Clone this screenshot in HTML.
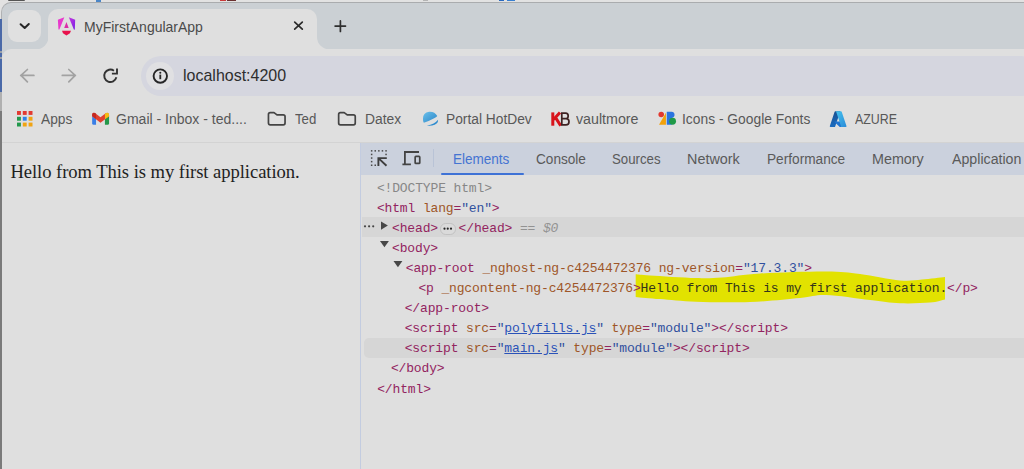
<!DOCTYPE html>
<html><head><meta charset="utf-8">
<style>
*{margin:0;padding:0;box-sizing:border-box}
html,body{width:1024px;height:469px;overflow:hidden;background:#e2e2e2;font-family:"Liberation Sans",sans-serif}
.a{position:absolute}
.t{position:absolute;white-space:pre;line-height:20px;height:20px}
#win{position:absolute;left:1px;top:1.5px;width:1030px;height:480px;background:#cbd0d4;border-top-left-radius:10px;border-top:1.5px solid #aaacae;border-left:1.2px solid #b0b2b4}
#leftedge{position:absolute;left:0;top:0;width:2px;height:469px}
.mono{font-family:"Liberation Mono",monospace;font-size:13px;letter-spacing:-0.14px}
.tg{color:#93245f}
.an{color:#9e5628}
.av{color:#30509e}
.gy{color:#878787}
.lnk{color:#2a52b8;text-decoration:underline}
.bm{font-size:15px;color:#474747}
.dt{font-size:14.5px;color:#4a4a4a}
</style></head><body>
<!-- desktop strip items -->
<div class="a" style="left:8px;top:0;width:17px;height:1.2px;border-radius:0 0 1px 1px;background:#555"></div>
<div class="a" style="left:96px;top:0;width:5px;height:1.5px;background:#4a86c8"></div>
<div class="a" style="left:220px;top:0;width:6px;height:1.3px;background:#c83a3a"></div><div class="a" style="left:227px;top:0;width:9px;height:1.3px;background:#6a3030"></div>
<div class="a" style="left:423px;top:0;width:5px;height:1.2px;background:#b4b4b4"></div>
<div class="a" style="left:499px;top:0;width:5px;height:1.3px;background:#2a6ac0"></div><div class="a" style="left:507px;top:0;width:8px;height:1.3px;background:#3a80d0"></div>

<div id="win"></div>
<!-- left edge strips -->
<div class="a" style="left:0;top:19px;width:1.5px;height:73px;background:#4a69a8"></div>
<div class="a" style="left:0;top:50.5px;width:1.5px;height:2px;background:#9aa0a8"></div>
<div class="a" style="left:0;top:56.5px;width:1.5px;height:2px;background:#9aa0a8"></div>
<div class="a" style="left:0;top:92px;width:1.5px;height:19px;background:#b0b0b0"></div>
<div class="a" style="left:0;top:111px;width:1.5px;height:358px;background:#7a7a7a"></div>

<!-- dropdown button -->
<div class="a" style="left:8px;top:10px;width:33px;height:32px;border-radius:9px;background:#e0e0e0"></div>
<svg class="a" style="left:0;top:0" width="50" height="50"><path d="M20.6 24.2 L24.7 28 L28.8 24" fill="none" stroke="#262626" stroke-width="2" stroke-linecap="round" stroke-linejoin="round"/></svg>

<!-- active tab -->
<div class="a" style="left:48px;top:9px;width:269px;height:42px;background:#dfdfdf;border-radius:10px 10px 0 0"></div>
<svg class="a" style="left:35.5px;top:37.2px" width="12.5" height="12.5" viewBox="0 0 12 12"><path d="M0 12 A12 12 0 0 0 12 0 L12 12 Z" fill="#dfdfdf"/></svg>
<svg class="a" style="left:317px;top:37.2px" width="12.5" height="12.5" viewBox="0 0 12 12"><path d="M12 12 A12 12 0 0 1 0 0 L0 12 Z" fill="#dfdfdf"/></svg>
<svg class="a" style="left:52px;top:12px" width="28" height="28" viewBox="0 0 469 469">
 <defs>
  <linearGradient id="ag" x1="0" y1="0" x2="1" y2="1"><stop offset="0" stop-color="#c834dc"/><stop offset="0.5" stop-color="#a02ce2"/><stop offset="1" stop-color="#761ce6"/></linearGradient>
 </defs>
 <path d="M98 128 L206 86 L124 292 L108 294 Z" fill="#e838cc"/>
 <path d="M282 86 L388 128 L382 296 L366 294 Z" fill="url(#ag)"/>
 <path d="M242 168 L280 266 L204 266 Z" fill="#dc2ea8"/>
 <path d="M168 316 L318 316 L300 356 L242 392 L184 356 Z" fill="#e8124c"/>
</svg>
<div class="t" id="title" style="left:84.48px;top:17.10px;font-family:'Liberation Sans';font-size:15px;color:#4a4a4a;transform:scaleX(0.9316);transform-origin:0 0;font-weight:normal">MyFirstAngularApp</div>
<svg class="a" style="left:286px;top:14px" width="66" height="24"><path d="M8.7 8.2 L16.3 15.2 M16.3 8.2 L8.7 15.2" stroke="#2a2a2a" stroke-width="1.7" stroke-linecap="round"/><path d="M54.4 6.9 L54.4 17.5 M49.1 12.1 L59.5 12.1" stroke="#2e2e2e" stroke-width="1.7" stroke-linecap="round"/></svg>

<!-- toolbar -->
<div class="a" style="left:2.2px;top:49px;width:1030px;height:94px;background:#dfdfdf;border-top-left-radius:9px"></div>
<svg class="a" style="left:12px;top:62px" width="120" height="28">
 <path d="M8.7 13.4 L21.9 13.4 M15.4 7.5 L9 13.4 L15.4 19.9" fill="none" stroke="#a2a2a2" stroke-width="1.7" stroke-linecap="round" stroke-linejoin="round"/>
 <path d="M50.3 13.4 L63.4 13.4 M56.8 7.5 L63.2 13.4 L56.8 19.9" fill="none" stroke="#a2a2a2" stroke-width="1.7" stroke-linecap="round" stroke-linejoin="round"/>
 <path d="M101.96 8.67 A6.2 6.2 0 1 0 104.39 15.35" fill="none" stroke="#333" stroke-width="1.9"/>
 <path d="M105 6.6 L105 11.65 L99.9 11.65" fill="none" stroke="#333" stroke-width="1.9" stroke-linejoin="miter"/>
</svg>
<!-- address bar -->
<div class="a" style="left:141px;top:56px;width:900px;height:40px;border-radius:20px;background:#d5d6df"></div>
<div class="a" style="left:146.4px;top:62.3px;width:27.5px;height:27.5px;border-radius:50%;background:#e0e0e2"></div>
<svg class="a" style="left:150px;top:66px" width="21" height="21">
 <circle cx="10.3" cy="10.05" r="6.7" fill="none" stroke="#262626" stroke-width="1.9"/>
 <circle cx="10.3" cy="6.7" r="1.05" fill="#262626"/>
 <path d="M10.3 8.6 L10.3 13.2" stroke="#262626" stroke-width="1.8"/>
</svg>
<div class="t" id="url" style="left:183.27px;top:66.01px;font-family:'Liberation Sans';font-size:17px;color:#2e2e2e;transform:scaleX(0.9408);transform-origin:0 0;font-weight:normal">localhost:4200</div>

<!-- bookmarks -->
<svg class="a" style="left:17px;top:110.7px" width="16" height="16">
 <rect x="0" y="0" width="3.9" height="3.9" fill="#e23a32"/><rect x="5.8" y="0" width="3.9" height="3.9" fill="#e23a32"/><rect x="11.6" y="0" width="3.9" height="3.9" fill="#e23a32"/>
 <rect x="0" y="5.8" width="3.9" height="3.9" fill="#22994c"/><rect x="5.8" y="5.8" width="3.9" height="3.9" fill="#2f82e8"/><rect x="11.6" y="5.8" width="3.9" height="3.9" fill="#f0a414"/>
 <rect x="0" y="11.6" width="3.9" height="3.9" fill="#22994c"/><rect x="5.8" y="11.6" width="3.9" height="3.9" fill="#f0a414"/><rect x="11.6" y="11.6" width="3.9" height="3.9" fill="#f0a414"/>
</svg>
<div class="t" id="bm1" style="left:41.30px;top:108.83px;font-family:'Liberation Sans';font-size:15.5px;color:#585858;transform:scaleX(0.8856);transform-origin:0 0;font-weight:normal">Apps</div>
<svg class="a" style="left:88px;top:106px" width="26" height="26" viewBox="0 0 469 469">
 <path d="M75 180 L145 235 L145 340 L100 340 Q75 340 75 315 Z" fill="#3a7ee6"/>
 <path d="M305 235 L380 180 L380 315 Q380 340 355 340 L305 340 Z" fill="#24984a"/>
 <path d="M75 160 Q75 110 125 125 L225 205 L320 130 Q380 105 380 170 L380 185 L225 300 L75 185 Z" fill="#e2402f"/>
 <path d="M75 160 Q75 110 125 125 L145 140 L145 235 L75 185 Z" fill="#c42a22"/>
 <path d="M305 140 L325 125 Q380 105 380 165 L380 185 L305 240 Z" fill="#f4bd14"/>
</svg>
<div class="t" id="bm2" style="left:115.97px;top:108.83px;font-family:'Liberation Sans';font-size:15.5px;color:#585858;transform:scaleX(0.9046);transform-origin:0 0;font-weight:normal">Gmail - Inbox - ted....</div>
<svg class="a" style="left:264px;top:106px" width="100" height="26">
 <path d="M6.2 6.65 L10 6.65 L13 8.9 L19.3 8.9 Q21.05 8.9 21.05 10.6 L21.05 17.1 Q21.05 18.85 19.3 18.85 L6.2 18.85 Q4.45 18.85 4.45 17.1 L4.45 8.4 Q4.45 6.65 6.2 6.65 Z" fill="none" stroke="#444" stroke-width="1.7" stroke-linejoin="round"/>
 <path d="M76.4 6.65 L80.2 6.65 L83.2 8.9 L89.5 8.9 Q91.25 8.9 91.25 10.6 L91.25 17.1 Q91.25 18.85 89.5 18.85 L76.4 18.85 Q74.65 18.85 74.65 17.1 L74.65 8.4 Q74.65 6.65 76.4 6.65 Z" fill="none" stroke="#444" stroke-width="1.7" stroke-linejoin="round"/>
</svg>
<div class="t" id="bm3" style="left:295.04px;top:108.83px;font-family:'Liberation Sans';font-size:15.5px;color:#585858;transform:scaleX(0.8540);transform-origin:0 0;font-weight:normal">Ted</div>
<div class="t" id="bm4" style="left:364.93px;top:108.83px;font-family:'Liberation Sans';font-size:15.5px;color:#585858;transform:scaleX(0.8942);transform-origin:0 0;font-weight:normal">Datex</div>
<svg class="a" style="left:418px;top:106px" width="26" height="26" viewBox="0 0 469 469">
 <defs><linearGradient id="pg" x1="0" y1="0" x2="1" y2="1"><stop offset="0" stop-color="#6cc0ea"/><stop offset="1" stop-color="#2a86c8"/></linearGradient></defs>
 <path d="M90 225 Q88 120 200 103 Q300 95 348 180 Q335 200 300 218 Q210 270 105 300 Q86 280 90 225 Z" fill="url(#pg)"/>
 <path d="M160 352 Q300 325 362 246 Q368 305 300 336 Q240 362 160 352 Z" fill="#2f8ccf"/>
</svg>
<div class="t" id="bm5" style="left:445.53px;top:108.83px;font-family:'Liberation Sans';font-size:15.5px;color:#585858;transform:scaleX(0.8889);transform-origin:0 0;font-weight:normal">Portal HotDev</div>
<svg class="a" style="left:546px;top:106px" width="26" height="26">
 <path d="M6.8 6.4 L6.8 19.7" stroke="#d8141c" stroke-width="3"/>
 <path d="M14 6.4 L7.5 13.6 M9.6 11.6 L14.7 19.7" stroke="#d8141c" stroke-width="3"/>
 <path d="M15.8 6.4 L15.8 19.7 M15 7.2 L19.6 7.2 Q22.2 7.2 22.2 9.9 Q22.2 12.7 19.6 12.7 L15.8 12.7 M15.8 12.7 L20 12.7 Q23 12.7 23 15.8 Q23 18.9 20 18.9 L15 18.9" fill="none" stroke="#3e2222" stroke-width="1.7"/>
</svg>
<div class="t" id="bm6" style="left:575.60px;top:108.83px;font-family:'Liberation Sans';font-size:15.5px;color:#585858;transform:scaleX(0.9179);transform-origin:0 0;font-weight:normal">vaultmore</div>
<svg class="a" style="left:654px;top:106px" width="26" height="26" viewBox="0 0 469 469">
 <circle cx="130" cy="155" r="50" fill="#e2382e"/>
 <path d="M90 340 L215 120 L215 340 Z" fill="#f2a20c"/>
 <path d="M230 105 L310 105 A55 55 0 0 1 320 215 L320 340 L230 340 Z" fill="#2a74e0"/>
 <circle cx="335" cy="275" r="62" fill="#1f9a48"/>
</svg>
<div class="t" id="bm7" style="left:681.55px;top:108.83px;font-family:'Liberation Sans';font-size:15.5px;color:#585858;transform:scaleX(0.8920);transform-origin:0 0;font-weight:normal">Icons - Google Fonts</div>
<svg class="a" style="left:829.24px;top:109.8px" width="18.3" height="17.2" viewBox="0 0 96 90.5">
 <defs>
  <linearGradient id="az1" x1="0" y1="0" x2="0" y2="1"><stop offset="0" stop-color="#1a4f90"/><stop offset="1" stop-color="#1a6cc0"/></linearGradient>
  <linearGradient id="az2" x1="0" y1="0" x2="1" y2="1"><stop offset="0" stop-color="#46c4ee"/><stop offset="1" stop-color="#2a8ad8"/></linearGradient>
 </defs>
 <path d="M33.338 6.544h26.038l-27.03 80.087a4.152 4.152 0 0 1-3.933 2.824H8.149a4.145 4.145 0 0 1-3.928-5.47L29.404 9.368a4.152 4.152 0 0 1 3.934-2.825z" fill="url(#az1)"/>
 <path d="M71.175 60.261h-41.29a1.911 1.911 0 0 0-1.305 3.309l26.532 24.764a4.171 4.171 0 0 0 2.846 1.121h23.38z" fill="#1f74d0"/>
 <path d="M66.595 9.364a4.145 4.145 0 0 0-3.928-2.82H33.648a4.146 4.146 0 0 1 3.928 2.82l25.184 74.62a4.146 4.146 0 0 1-3.928 5.472h29.02a4.146 4.146 0 0 0 3.927-5.472z" fill="url(#az2)"/>
</svg>
<div class="t" id="bm8" style="left:854.70px;top:108.83px;font-family:'Liberation Sans';font-size:15.5px;color:#585858;transform:scaleX(0.8007);transform-origin:0 0;font-weight:normal">AZURE</div>
<div class="a" style="left:2px;top:142px;width:1030px;height:1px;background:#d3d3d3"></div>

<!-- page content -->
<div class="a" style="left:2px;top:143px;width:358px;height:326px;background:#dfdfdf"></div>
<div class="t" id="hello" style="left:10.40px;top:162.22px;font-family:'Liberation Serif';font-size:18.6px;color:#1e1e1e;letter-spacing:-0.054px;font-weight:normal">Hello from This is my first application.</div>

<!-- devtools -->
<div class="a" style="left:360px;top:143px;width:664px;height:326px;background:#dfdfdf;border-left:1px solid #c3cce0"></div>
<div class="a" style="left:361px;top:143px;width:663px;height:32px;background:#cbd1dd"></div>
<svg class="a" style="left:364px;top:144px" width="64" height="28">
 <g fill="#4a4a4a">
  <rect x="6.9" y="6.1" width="1.5" height="1.5"/><rect x="10.5" y="6.1" width="1.5" height="1.5"/><rect x="14.1" y="6.1" width="1.5" height="1.5"/><rect x="17.7" y="6.1" width="1.5" height="1.5"/><rect x="21.3" y="6.1" width="1.5" height="1.5"/>
  <rect x="6.9" y="9.7" width="1.5" height="1.5"/><rect x="6.9" y="13.3" width="1.5" height="1.5"/><rect x="6.9" y="16.9" width="1.5" height="1.5"/><rect x="6.9" y="20.5" width="1.5" height="1.5"/>
  <rect x="10.5" y="20.5" width="1.5" height="1.5"/><rect x="21.3" y="9.7" width="1.5" height="1.5"/>
 </g>
 <path d="M14.4 21.9 L14.4 14.1 L22.8 14.1 M14.4 14.1 L22.5 21.7" fill="none" stroke="#3e3e3e" stroke-width="1.9"/>
 <path d="M55 8 L40.9 8 L40.9 20.3 M38.4 20.3 L46.9 20.3" fill="none" stroke="#444" stroke-width="1.8"/>
 <rect x="51.15" y="12.45" width="4.6" height="7.0" rx="0.8" fill="none" stroke="#444" stroke-width="1.7"/>
</svg>
<div class="a" style="left:432.6px;top:149px;width:1px;height:18px;background:#b9c3d6"></div>
<div class="t" id="dt1" style="left:453.30px;top:148.80px;font-family:'Liberation Sans';font-size:14.7px;color:#4574d2;transform:scaleX(0.9207);transform-origin:0 0;font-weight:normal">Elements</div>
<div class="a" style="left:441px;top:172.5px;width:82.5px;height:2px;border-radius:1px;background:#3e72d6"></div>
<div class="t" id="dt2" style="left:536.05px;top:148.80px;font-family:'Liberation Sans';font-size:14.7px;color:#5a5a5a;transform:scaleX(0.9267);transform-origin:0 0;font-weight:normal">Console</div>
<div class="t" id="dt3" style="left:612.46px;top:148.80px;font-family:'Liberation Sans';font-size:14.7px;color:#5a5a5a;transform:scaleX(0.9021);transform-origin:0 0;font-weight:normal">Sources</div>
<div class="t" id="dt4" style="left:687.42px;top:148.80px;font-family:'Liberation Sans';font-size:14.7px;color:#5a5a5a;transform:scaleX(0.9799);transform-origin:0 0;font-weight:normal">Network</div>
<div class="t" id="dt5" style="left:767.48px;top:148.80px;font-family:'Liberation Sans';font-size:14.7px;color:#5a5a5a;transform:scaleX(0.9299);transform-origin:0 0;font-weight:normal">Performance</div>
<div class="t" id="dt6" style="left:872.13px;top:148.80px;font-family:'Liberation Sans';font-size:14.7px;color:#5a5a5a;transform:scaleX(0.9762);transform-origin:0 0;font-weight:normal">Memory</div>
<div class="t" id="dt7" style="left:952.00px;top:148.80px;font-family:'Liberation Sans';font-size:14.7px;color:#5a5a5a;transform:scaleX(0.9657);transform-origin:0 0;font-weight:normal">Application</div>

<!-- row highlights -->
<div class="a" style="left:362px;top:217px;width:662px;height:20px;background:#d6d6d6"></div>
<div class="a" style="left:364px;top:337.5px;width:660px;height:20px;border-radius:5px 0 0 5px;background:#d6d6d6"></div>

<!-- yellow marker -->
<svg class="a" style="left:0;top:0" width="1024" height="469">
 <path d="M635.7 274.2 C638.1 274.4 640.0 274.8 650 275.4 C660.0 276.0 684.0 277.6 696 278 C708.0 278.4 711.3 278.2 722 277.5 C732.7 276.8 742.7 274.5 760 273.5 C777.3 272.5 809.3 271.4 826 271.5 C842.7 271.6 847.7 272.5 860 274 C872.3 275.5 889.7 279.6 900 280.5 C910.3 281.4 914.5 280.2 922 279.6 C929.5 279.0 941.2 277.4 945 277 L945 299.5 C942.5 300.0 937.5 302.0 930 302.6 C922.5 303.2 910.0 303.7 900 303.3 C890.0 302.9 882.3 301.4 870 300 C857.7 298.6 837.7 295.3 826 295 C814.3 294.7 812.7 296.8 800 298 C787.3 299.2 767.3 301.4 750 302 C732.7 302.6 711.0 302.3 696 301.8 C681.0 301.3 670.0 299.9 660 299.1 C650.0 298.3 639.8 297.3 635.7 296.9 Z" fill="#e2e200"/>
</svg>

<!-- tree -->
<div class="t mono" style="left:376.90px;top:179px"><span class="gy">&lt;!DOCTYPE html&gt;</span></div>
<div class="t mono" style="left:376.90px;top:199px"><span class="tg">&lt;html</span> <span class="an">lang</span><span class="tg">=</span><span class="av">"en"</span><span class="tg">&gt;</span></div>
<svg class="a" style="left:360px;top:217px" width="32" height="40">
 <circle cx="5" cy="9.3" r="1.1" fill="#444"/><circle cx="9.1" cy="9.3" r="1.1" fill="#444"/><circle cx="13.2" cy="9.3" r="1.1" fill="#444"/>
 <path d="M21 4.4 L27.9 8.55 L21 12.7 Z" fill="#474747"/>
 <path d="M20 24 L28.9 24 L24.45 30.3 Z" fill="#474747"/>
</svg>
<div class="t mono" style="left:392.00px;top:219px"><span class="tg">&lt;head&gt;</span></div>
<div class="a" style="left:440.3px;top:223.1px;width:15.3px;height:11.5px;border-radius:5.75px;background:#dadada;border:1px solid #c2c2c2"></div>
<svg class="a" style="left:440.3px;top:223.2px" width="16" height="12"><circle cx="4.5" cy="5.7" r="1.1" fill="#262626"/><circle cx="7.75" cy="5.7" r="1.1" fill="#262626"/><circle cx="11" cy="5.7" r="1.1" fill="#262626"/></svg>
<div class="t mono" style="left:458.60px;top:219px"><span class="tg">&lt;/head&gt;</span> <span style="font-style:italic;color:#929292">== $0</span></div>
<div class="t mono" style="left:392.00px;top:239px"><span class="tg">&lt;body&gt;</span></div>
<svg class="a" style="left:393.3px;top:257.3px" width="14" height="14"><path d="M0.5 4 L9.4 4 L4.95 10.3 Z" fill="#474747"/></svg>
<div class="t mono" style="left:405.80px;top:259px"><span class="tg">&lt;app-root</span> <span class="an">_nghost-ng-c4254472376</span> <span class="an">ng-version</span><span class="tg">=</span><span class="av">"17.3.3"</span><span class="tg">&gt;</span></div>
<div class="t mono" style="left:418.40px;top:279px"><span class="tg">&lt;p</span> <span class="an">_ngcontent-ng-c4254472376</span><span class="tg">&gt;</span><span style="color:#34341a">Hello from This is my first application.</span><span class="tg">&lt;/p&gt;</span></div>
<div class="t mono" style="left:404.70px;top:299px"><span class="tg">&lt;/app-root&gt;</span></div>
<div class="t mono" style="left:404.70px;top:319px"><span class="tg">&lt;script</span> <span class="an">src</span><span class="tg">=</span><span class="av">"<span class="lnk">polyfills.js</span>"</span> <span class="an">type</span><span class="tg">=</span><span class="av">"module"</span><span class="tg">&gt;&lt;/script&gt;</span></div>
<div class="t mono" style="left:404.70px;top:339px"><span class="tg">&lt;script</span> <span class="an">src</span><span class="tg">=</span><span class="av">"<span class="lnk">main.js</span>"</span> <span class="an">type</span><span class="tg">=</span><span class="av">"module"</span><span class="tg">&gt;&lt;/script&gt;</span></div>
<div class="t mono" style="left:390.90px;top:359px"><span class="tg">&lt;/body&gt;</span></div>
<div class="t mono" style="left:377.20px;top:380px"><span class="tg">&lt;/html&gt;</span></div>
</body></html>
